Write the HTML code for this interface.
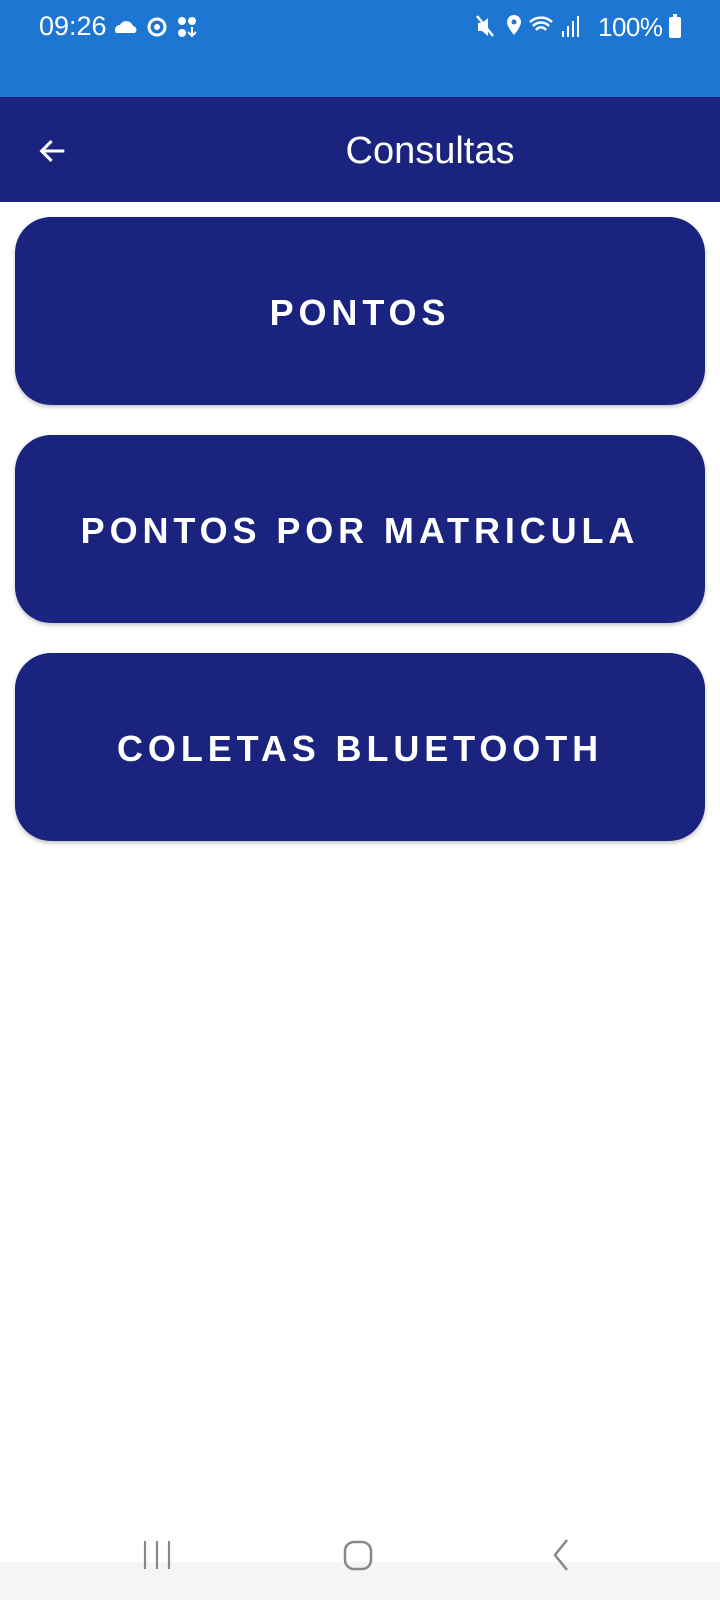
<!DOCTYPE html>
<html><head><meta charset="utf-8"><style>
*{margin:0;padding:0;box-sizing:border-box}
body{width:720px;height:1600px;background:#fff;font-family:"Liberation Sans",sans-serif;position:relative;overflow:hidden}
.sb{position:absolute;top:0;left:0;width:720px;height:97px;background:#1c76d2;color:#fff}
.tb{position:absolute;top:97px;left:0;width:720px;height:105px;background:#1a237e;color:#fff}
.btn{position:absolute;left:15px;width:690px;height:188px;background:#1a237e;border-radius:36px;color:#fff;font-size:36px;font-weight:bold;letter-spacing:4.9px;text-align:center;line-height:192px;box-shadow:0 2px 4px rgba(0,0,0,.25)}
.nav{position:absolute;left:0;top:1562px;width:720px;height:38px;background:#f5f5f5}
</style></head><body>
<div class="sb">
<div style="position:absolute;left:39px;top:11px;font-size:27px">09:26</div>
<svg style="position:absolute;left:114px;top:15px" width="90" height="26" viewBox="0 0 90 26">
<path d="M2 18 a5 5 0 0 1 4-8 a7 7 0 0 1 13 1 a4 4 0 0 1 2 7z" fill="#fff"/>
<circle cx="43" cy="12" r="8" fill="none" stroke="#fff" stroke-width="3"/>
<circle cx="43" cy="12" r="3" fill="#fff"/>
<circle cx="68" cy="6" r="4" fill="#fff"/><circle cx="78" cy="6" r="4" fill="#fff"/><circle cx="68" cy="18" r="4" fill="#fff"/>
<path d="M78 12v8M74 17l4 4 4-4" stroke="#fff" stroke-width="2" fill="none"/>
</svg>
<svg style="position:absolute;left:476px;top:13px" width="110" height="28" viewBox="0 0 110 28">
<path d="M2 10h4l6-5v18l-6-5H2z" fill="#fff"/><path d="M1 3l16 20" stroke="#fff" stroke-width="2.5"/>
<path d="M38 2a7 7 0 0 1 7 7c0 5-7 13-7 13s-7-8-7-13a7 7 0 0 1 7-7z" fill="#fff"/><circle cx="38" cy="9" r="2.5" fill="#1c76d2"/>
<path d="M54 9a16 16 0 0 1 22 0M57 13a11 11 0 0 1 16 0M60 17a6 6 0 0 1 10 0" stroke="#fff" stroke-width="2.5" fill="none"/>
<rect x="86" y="18" width="2" height="6" fill="#fff"/><rect x="91" y="13" width="2" height="11" fill="#fff"/><rect x="96" y="8" width="2" height="16" fill="#fff"/><rect x="101" y="3" width="2" height="21" fill="#fff"/>
</svg>
<div style="position:absolute;left:598px;top:12px;font-size:26px;letter-spacing:-0.5px">100%</div>
<div style="position:absolute;left:669px;top:17px;width:12px;height:21px;background:#fff;border-radius:2px"></div>
<div style="position:absolute;left:673px;top:14px;width:4px;height:4px;background:#fff"></div>
</div>
<div class="tb">
<svg style="position:absolute;left:36px;top:37px" width="34" height="34" viewBox="0 0 24 24"><path d="M20 12H5M11 5l-7 7 7 7" stroke="#fff" stroke-width="2.2" fill="none"/></svg>
<div style="position:absolute;left:0;width:860px;text-align:center;top:33px;font-size:38px">Consultas</div>
</div>
<div class="btn" style="top:217px">PONTOS</div>
<div class="btn" style="top:435px">PONTOS POR MATRICULA</div>
<div class="btn" style="top:653px">COLETAS BLUETOOTH</div>
<div class="nav"></div>
<svg style="position:absolute;left:140px;top:1538px" width="460" height="34" viewBox="0 0 460 34">
<path d="M5 3v28M17 3v28M29 3v28" stroke="#888" stroke-width="2.2"/>
<rect x="205" y="4" width="26" height="27" rx="9" fill="none" stroke="#888" stroke-width="2.5"/>
<path d="M427 2l-12 15 12 15" stroke="#888" stroke-width="2.5" fill="none"/>
</svg>
</body></html>
